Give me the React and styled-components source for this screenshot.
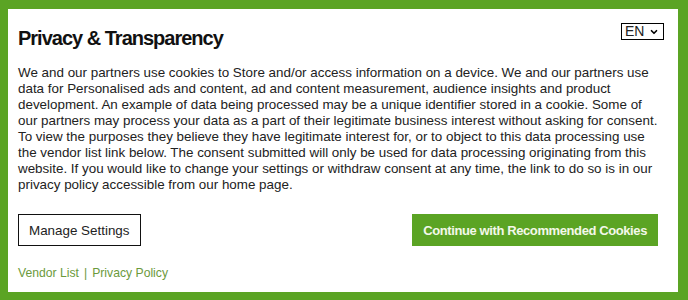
import React from "react";
import styled, { createGlobalStyle } from "styled-components";
import { ChevronDown } from "lucide-react";

const GlobalStyle = createGlobalStyle`
  html, body {
    margin: 0;
    padding: 0;
    background: #5ba424;
  }
  * { box-sizing: border-box; }
`;

export default function App() {
  return (
    <>
      <GlobalStyle />
      <Frame>
        <Panel>
          <Header>
            <Title>Privacy &amp; Transparency</Title>
            <LangBox>
              <LangSelect defaultValue="EN">
                <option value="EN">EN</option>
              </LangSelect>
              <ChevronDown size={10} strokeWidth={4} color="#000" />
            </LangBox>
          </Header>

          <Body>
            We and our partners use cookies to Store and/or access information on a device. We and our partners use
            data for Personalised ads and content, ad and content measurement, audience insights and product
            development. An example of data being processed may be a unique identifier stored in a cookie. Some of
            our partners may process your data as a part of their legitimate business interest without asking for consent.
            To view the purposes they believe they have legitimate interest for, or to object to this data processing use
            the vendor list link below. The consent submitted will only be used for data processing originating from this
            website. If you would like to change your settings or withdraw consent at any time, the link to do so is in our
            privacy policy accessible from our home page.
          </Body>

          <Actions>
            <Button>Manage Settings</Button>
            <Button primary>Continue with Recommended Cookies</Button>
          </Actions>

          <Footer>
            <Link href="#">Vendor List</Link>
            <Sep>|</Sep>
            <Link href="#">Privacy Policy</Link>
          </Footer>
        </Panel>
      </Frame>
    </>
  );
}

const Frame = styled.div`
  width: 688px;
  height: 300px;
  padding: 9px 10px 8px 8px;
  background: #5ba424;
`;

const Panel = styled.div`
  height: 100%;
  background: #fff;
  padding: 14px 20px 0 10px;
  font-family: "Liberation Sans", Arial, sans-serif;
  color: #222;
`;

const Header = styled.div`
  display: flex;
  justify-content: space-between;
  align-items: flex-start;
`;

const Title = styled.h1`
  margin: 3px 0 0 0;
  font-size: 20px;
  line-height: 24px;
  font-weight: 700;
  letter-spacing: -1px;
  color: #111;
`;

const LangBox = styled.label`
  display: flex;
  align-items: center;
  gap: 4px;
  height: 17px;
  padding: 0 4px 0 3px;
  margin-right: -6px;
  border: 1px solid #000;
  background: #fff;
`;

const LangSelect = styled.select`
  appearance: none;
  border: none;
  background: transparent;
  padding: 0;
  margin: 0;
  font-family: "Liberation Sans", Arial, sans-serif;
  font-size: 14px;
  line-height: 15px;
  color: #222;
  outline: none;
`;

const Body = styled.p`
  margin: 15px -6px 0 0;
  font-size: 13.4px;
  line-height: 16px;
  color: #222;
`;

const Actions = styled.div`
  display: flex;
  justify-content: space-between;
  margin-top: 21px;
`;

const Button = styled.button`
  height: 32px;
  padding: 0 10px;
  font-family: "Liberation Sans", Arial, sans-serif;
  font-size: ${({ primary }) => (primary ? "13px" : "13.4px")};
  font-weight: ${({ primary }) => (primary ? 700 : 400)};
  letter-spacing: ${({ primary }) => (primary ? "-0.4px" : "0")};
  color: ${({ primary }) => (primary ? "#f4f8ea" : "#222")};
  background: ${({ primary }) => (primary ? "#5ba424" : "#fff")};
  border: 1px solid ${({ primary }) => (primary ? "#5ba424" : "#111")};
  border-radius: 0;
  cursor: pointer;
`;

const Footer = styled.div`
  display: flex;
  align-items: center;
  gap: 5px;
  margin-top: 20px;
  font-size: 12.2px;
  line-height: 14px;
`;

const Link = styled.a`
  color: #6b9a3c;
  text-decoration: none;
`;

const Sep = styled.span`
  color: #6b9a3c;
`;
